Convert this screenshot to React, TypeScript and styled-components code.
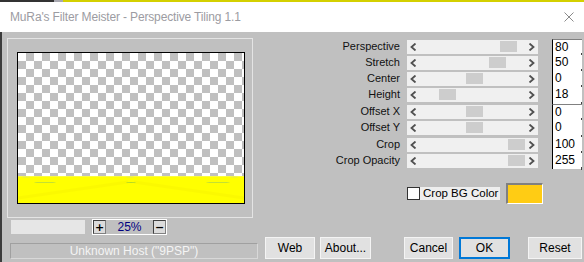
import React from "react";
import styled, { createGlobalStyle } from "styled-components";

const Global = createGlobalStyle`
  html, body { margin: 0; padding: 0; }
  body { width: 584px; height: 262px; overflow: hidden; background: #c0c0c0; font-family: "Liberation Sans", Arial, sans-serif; }
`;

const Window = styled.div`
  width: 584px;
  height: 262px;
  display: flex;
  flex-direction: column;
  overflow: hidden;
`;

const TopStripe = styled.div`
  height: 2px;
  display: flex;
`;
const StripeSeg = styled.div<{ $w?: number; $c: string }>`
  height: 2px;
  background: ${(p) => p.$c};
  ${(p) => (p.$w ? `width: ${p.$w}px;` : "flex: 1;")}
`;

const TitleBar = styled.div`
  height: 30px;
  background: #ffffff;
  display: flex;
  align-items: center;
  justify-content: space-between;
  padding: 0 10px 0 10px;
`;
const TitleText = styled.span`
  font-family: "Liberation Sans", Arial, sans-serif;
  font-size: 12px;
  letter-spacing: -0.15px;
  color: #9c9ca2;
  padding-bottom: 1px;
`;
const CloseIcon = styled.svg`
  width: 10px;
  height: 10px;
  margin-bottom: 1px;
`;

const Body = styled.div`
  flex: 1;
  display: flex;
  background: #c0c0c0;
  border-left: 2px solid #3c3c3c;
`;

const LeftColumn = styled.div`
  width: 258px;
  display: flex;
  flex-direction: column;
  padding-top: 6px;
`;

const PreviewGroup = styled.div`
  margin-left: 5px;
  box-sizing: border-box;
  width: 246px;
  height: 180px;
  border: 1px solid #e4e4e4;
  padding: 13px 0 0 9px;
`;

const PreviewImage = styled.div`
  width: 228px;
  height: 152px;
  border: 1px solid #000;
  box-sizing: border-box;
  display: flex;
  flex-direction: column;
`;

const Checker = styled.div`
  flex: 1;
  background: repeating-conic-gradient(#c0c0c0 0 25%, #ffffff 0 50%) 0 0 / 16px 16px;
`;

const YellowBand = styled.svg`
  display: block;
  width: 226px;
  height: 27px;
`;

const ZoomRow = styled.div`
  display: flex;
  align-items: center;
  margin-top: 1px;
  height: 16px;
`;
const SizeField = styled.div`
  margin-left: 9px;
  width: 74px;
  height: 14px;
  background: #e6e6e6;
`;
const ZoomBox = styled.div`
  margin-left: 7px;
  width: 75px;
  height: 16px;
  box-sizing: border-box;
  border: 1px solid #ffffff;
  display: flex;
  align-items: center;
  justify-content: space-between;
`;
const ZoomButton = styled.div`
  width: 13px;
  height: 14px;
  box-sizing: border-box;
  border: 1px solid #404040;
  border-right-color: #808080;
  border-bottom-color: #808080;
  background: #dcdcdc;
  display: flex;
  align-items: center;
  justify-content: center;
  font-family: "DejaVu Sans", sans-serif;
  font-weight: bold;
  font-size: 11px;
  color: #000;
  line-height: 1;
`;
const ZoomValue = styled.span`
  font-size: 12px;
  color: #000080;
`;

const StatusField = styled.div`
  margin-left: 8px;
  margin-top: 8px;
  width: 248px;
  height: 16px;
  box-sizing: border-box;
  border: 1px solid #a0a0a0;
  border-right-color: #d8d8d8;
  border-bottom-color: #d8d8d8;
  display: flex;
  align-items: center;
  justify-content: center;
  font-size: 12px;
  color: #f4f4f4;
`;

const RightColumn = styled.div`
  flex: 1;
  display: flex;
  flex-direction: column;
  padding-top: 7px;
`;

const Sliders = styled.div`
  display: flex;
  flex-direction: column;
`;

const SliderRow = styled.div<{ $h: number }>`
  height: ${(p) => p.$h}px;
  display: flex;
  align-items: flex-start;
`;

const Label = styled.div`
  width: 140px;
  height: 15px;
  text-align: right;
  font-size: 11px;
  font-weight: 400;
  line-height: 15px;
  color: #111;
`;

const Track = styled.div`
  position: relative;
  margin-left: 7px;
  width: 131px;
  height: 14px;
  background: #f0f0f0;
  margin-top: 1px;
`;

const Thumb = styled.div`
  position: absolute;
  top: 1px;
  width: 17px;
  height: 11px;
  background: #cdcdcd;
`;

const Arrow = styled.svg<{ $side: "l" | "r" }>`
  position: absolute;
  top: 3px;
  ${(p) => (p.$side === "l" ? "left: 3px;" : "right: 3px;")}
  width: 7px;
  height: 8px;
`;

const ValueBox = styled.div<{ $first?: boolean }>`
  position: relative;
  margin-left: 14px;
  width: 30px;
  height: 100%;
  box-sizing: border-box;
  background: #ffffff;
  border-left: 1px solid #000;
  ${(p) => (p.$first ? "border-top: 1px solid #808080;" : "")}
  font-size: 12px;
  line-height: 15px;
  padding-left: 2px;
  color: #000;
  &::after {
    content: "";
    position: absolute;
    right: 0;
    bottom: -1px;
    width: 1px;
    height: 3px;
    background: #404040;
  }
`;

const CheckRow = styled.div`
  display: flex;
  align-items: center;
  margin-top: 14px;
  margin-left: 147px;
  height: 21px;
`;
const CheckBox = styled.div`
  width: 13px;
  height: 13px;
  box-sizing: border-box;
  border: 1px solid #333;
  background: #fff;
`;
const CheckLabel = styled.div`
  width: 80px;
  height: 13px;
  background: #eeeeee;
  font-size: 11.5px;
  line-height: 13px;
  padding-left: 3px;
  box-sizing: border-box;
  white-space: nowrap;
  overflow: hidden;
  color: #000;
`;
const Swatch = styled.div`
  margin-left: 6px;
  width: 37px;
  height: 21px;
  box-sizing: border-box;
  border: 2px solid #808080;
  border-right: 1px solid #ffffff;
  border-bottom: 1px solid #ffffff;
  background: #ffcc14;
`;

const ButtonRow = styled.div`
  display: flex;
  margin-top: 33px;
  margin-left: 5px;
`;

const Button = styled.div<{ $w: number; $gap: number; $primary?: boolean }>`
  width: ${(p) => p.$w}px;
  height: 22px;
  margin-left: ${(p) => p.$gap}px;
  box-sizing: border-box;
  border: ${(p) => (p.$primary ? "2px solid #0078d7" : "1px solid #f4f4f4")};
  background: #e1e1e1;
  display: flex;
  align-items: center;
  justify-content: center;
  font-size: 12px;
  color: #000;
  flex-shrink: 0;
`;

const sliders = [
  { label: "Perspective", thumb: 93, value: "80", h: 16 },
  { label: "Stretch", thumb: 82, value: "50", h: 16 },
  { label: "Center", thumb: 59, value: "0", h: 16 },
  { label: "Height", thumb: 32, value: "18", h: 17 },
  { label: "Offset X", thumb: 59, value: "0", h: 16 },
  { label: "Offset Y", thumb: 59, value: "0", h: 17 },
  { label: "Crop", thumb: 101, value: "100", h: 16 },
  { label: "Crop Opacity", thumb: 101, value: "255", h: 16 },
];

export default function App() {
  return (
    <>
      <Global />
      <Window>
        <TopStripe>
          <StripeSeg $w={54} $c="#333333" />
          <StripeSeg $w={9} $c="#a8a8b0" />
          <StripeSeg $c="#d4d000" />
        </TopStripe>
        <TitleBar>
          <TitleText>MuRa's Filter Meister - Perspective Tiling 1.1</TitleText>
          <CloseIcon viewBox="0 0 10 10">
            <path d="M0.5 0.5 L9.5 9.5 M9.5 0.5 L0.5 9.5" stroke="#8a8a8a" strokeWidth="1" fill="none" />
          </CloseIcon>
        </TitleBar>
        <Body>
          <LeftColumn>
            <PreviewGroup>
              <PreviewImage>
                <Checker />
                <YellowBand viewBox="0 0 226 27" preserveAspectRatio="none">
                  <rect x="0" y="0" width="226" height="27" fill="#ffff00" />
                  <rect x="0" y="0" width="226" height="1" fill="#f6f680" opacity="0.5" />
                  <path d="M0 22 L110 6 M226 22 L116 6" stroke="#f6f000" strokeWidth="3" opacity="0.35" />
                  <ellipse cx="8" cy="1" rx="4" ry="0.6" fill="#d8e070" opacity="0.7" />
                  <ellipse cx="112" cy="1" rx="4" ry="0.6" fill="#d8e070" opacity="0.7" />
                  <ellipse cx="216" cy="1" rx="4" ry="0.6" fill="#d8e070" opacity="0.7" />
                  <ellipse cx="27" cy="6.5" rx="11" ry="0.6" fill="#b4d840" opacity="0.8" />
                  <ellipse cx="113" cy="6.5" rx="5" ry="0.6" fill="#a0d030" opacity="0.8" />
                  <ellipse cx="200" cy="6.5" rx="12" ry="0.6" fill="#b4d840" opacity="0.8" />
                </YellowBand>
              </PreviewImage>
            </PreviewGroup>
            <ZoomRow>
              <SizeField />
              <ZoomBox>
                <ZoomButton>+</ZoomButton>
                <ZoomValue>25%</ZoomValue>
                <ZoomButton>−</ZoomButton>
              </ZoomBox>
            </ZoomRow>
            <StatusField>Unknown Host ("9PSP")</StatusField>
          </LeftColumn>
          <RightColumn>
            <Sliders>
              {sliders.map((s, i) => (
                <SliderRow key={s.label} $h={s.h}>
                  <Label>{s.label}</Label>
                  <Track>
                    <Arrow $side="l" viewBox="0 0 7 8">
                      <path d="M5.5 0.5 L1.5 4 L5.5 7.5" stroke="#505050" strokeWidth="1.8" fill="none" />
                    </Arrow>
                    <Thumb style={{ left: s.thumb }} />
                    <Arrow $side="r" viewBox="0 0 7 8">
                      <path d="M1.5 0.5 L5.5 4 L1.5 7.5" stroke="#505050" strokeWidth="1.8" fill="none" />
                    </Arrow>
                  </Track>
                  <ValueBox $first={i === 0 || i === 4}>{s.value}</ValueBox>
                </SliderRow>
              ))}
            </Sliders>
            <CheckRow>
              <CheckBox />
              <CheckLabel>Crop BG Color</CheckLabel>
              <Swatch />
            </CheckRow>
            <ButtonRow>
              <Button $w={50} $gap={0}>Web</Button>
              <Button $w={51} $gap={5}>About...</Button>
              <Button $w={49} $gap={33}>Cancel</Button>
              <Button $w={51} $gap={6} $primary>OK</Button>
              <Button $w={54} $gap={18}>Reset</Button>
            </ButtonRow>
          </RightColumn>
        </Body>
      </Window>
    </>
  );
}
